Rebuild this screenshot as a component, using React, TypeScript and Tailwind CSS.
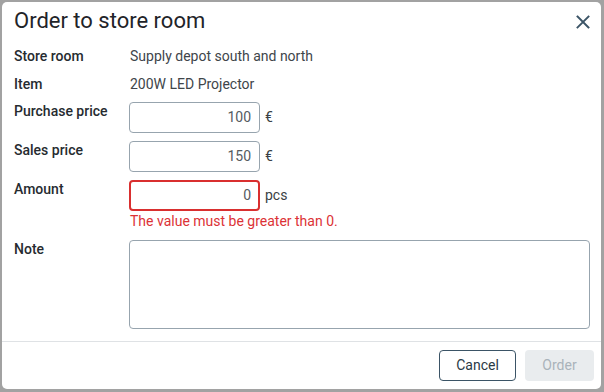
type PriceRowProps = {
  label: string;
  value: string;
  unit: string;
  error?: string;
};

function PriceRow({ label, value, unit, error }: PriceRowProps) {
  return (
    <>
      <div className="text-[14px] font-medium leading-[18px] text-[#262b30]">{label}</div>
      <div>
        <div className="flex items-center gap-[5px]">
          <div
            className={
              error
                ? "flex h-[31px] w-[131px] items-center justify-end rounded-[4px] border-2 border-[#d92f2f] pr-[7px] text-[14px] text-[#555b61]"
                : "flex h-[31px] w-[131px] items-center justify-end rounded-[4px] border border-[#97a4ae] pr-2 text-[14px] text-[#555b61]"
            }
          >
            {value}
          </div>
          <span className="text-[14px] text-[#3a3f44]">{unit}</span>
        </div>
        {error && <p className="pl-px text-[14px] leading-5 text-[#dc3236]">{error}</p>}
      </div>
    </>
  );
}

export default function App() {
  return (
    <div className="h-[392px] w-[604px] bg-[#a2a2a2] pb-[3px] pl-[2px] pr-[3px] pt-[2px] font-['Roboto',sans-serif]">
      <div className="flex h-full flex-col rounded-[5px] bg-white">
        <div className="flex items-start justify-between pl-3 pr-[8px] pt-[5px]">
          <h1 className="text-[22px] leading-[28px] text-[#1f2429]">Order to store room</h1>
          <button className="mt-[5px] flex h-[20px] w-[20px] items-center justify-center text-[#3b5466]" aria-label="Close">
            <svg viewBox="0 0 16 16" className="h-[16px] w-[16px]" fill="none">
              <path d="M2.5 2.5l11 11M13.5 2.5l-11 11" stroke="currentColor" strokeWidth="1.9" strokeLinecap="square" />
            </svg>
          </button>
        </div>

        <div className="grid grid-cols-[115px_1fr] gap-y-2 pb-3 pl-3 pr-[11px] pt-[7px]">
          <div className="-mb-2 flex h-7 items-center text-[14px] font-medium text-[#262b30]">Store room</div>
          <div className="-mb-2 flex h-7 items-center pl-px text-[14px] text-[#40454a]">Supply depot south and north</div>
          <div className="-mb-1 flex h-7 items-center text-[14px] font-medium text-[#262b30]">Item</div>
          <div className="-mb-1 flex h-7 items-center pl-px text-[14px] text-[#40454a]">200W LED Projector</div>

          <PriceRow label="Purchase price" value="100" unit="€" />
          <PriceRow label="Sales price" value="150" unit="€" />
          <PriceRow label="Amount" value="0" unit="pcs" error="The value must be greater than 0." />

          <div className="mt-px text-[14px] font-medium leading-[18px] text-[#262b30]">Note</div>
          <textarea className="mt-px h-[89px] w-full resize-none rounded-[4px] border border-[#97a4ae]" />
        </div>

        <div className="mt-auto flex justify-end gap-[9px] border-t border-[#dfe2e5] pb-2 pr-[7px] pt-2">
          <button className="h-[31px] w-[77px] rounded-[4px] border border-[#3b5466] text-[14px] text-[#2a3945]">Cancel</button>
          <button className="h-[31px] w-[69px] rounded-[4px] bg-[#e9ecee] text-[14px] text-[#a9b3ba]">Order</button>
        </div>
      </div>
    </div>
  );
}
